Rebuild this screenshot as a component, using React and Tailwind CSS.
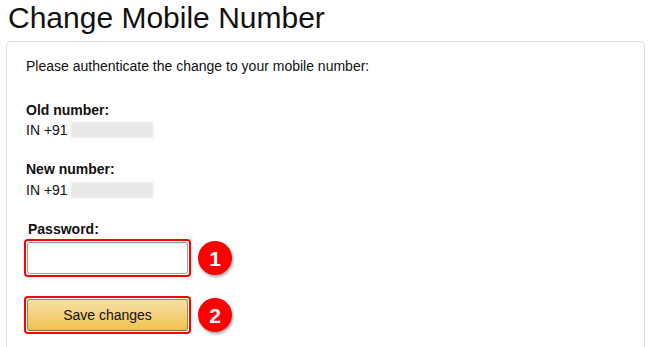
const Badge = ({ n }) => {
  return (
    <div className="w-[34px] h-[34px] rounded-full bg-[#f00] text-white flex items-center justify-center text-[21px] font-bold shadow-[1px_2px_3px_rgba(0,0,0,0.35)] leading-none">
      {n}
    </div>
  );
};

const Masked = () => {
  return <div className="ml-[3px] w-[82px] h-[16px] bg-[#e8e8e8] blur-[1px]"></div>;
};

export default function App() {
  return (
    <div
      className="w-[650px] h-[347px] overflow-hidden bg-white text-[#111]"
      style={{ fontFamily: '"Liberation Sans", Arial, sans-serif' }}
    >
      <h1 className="pl-[8px] text-[30px] leading-[36px] font-normal">Change Mobile Number</h1>
      <div className="mt-[5px] ml-[6px] w-[639px] h-[320px] border border-[#ddd] rounded-[5px] pt-[14px] pl-[19px]">
        <p className="text-[14px] leading-[20px]">Please authenticate the change to your mobile number:</p>

        <div className="mt-[24px] text-[14px] leading-[20px]">
          <div className="font-bold">Old number:</div>
          <div className="flex items-center">
            <span>IN +91</span>
            <Masked />
          </div>
        </div>

        <div className="mt-[19px] text-[14px] leading-[20px]">
          <div className="font-bold">New number:</div>
          <div className="mt-px flex items-center">
            <span>IN +91</span>
            <Masked />
          </div>
        </div>

        <div className="mt-[19px] pl-[2px] text-[14px] leading-[20px] font-bold">Password:</div>
        <div className="-ml-[2px] flex items-center gap-[7px]">
          <div className="w-[167px] h-[38px] border-2 border-[#f00] rounded-[4px] p-px">
            <div className="w-full h-full border border-[#a6a6a6] border-t-[#949494] rounded-[3px] bg-white shadow-[inset_0_1px_0_rgba(0,0,0,0.07)]"></div>
          </div>
          <Badge n="1" />
        </div>

        <div className="mt-[19px] -ml-[2px] flex items-center gap-[7px]">
          <div className="w-[167px] h-[38px] border-2 border-[#f00] rounded-[4px] p-px">
            <div className="w-full h-full border border-[#a88734] border-b-[#846a29] rounded-[3px] bg-gradient-to-b from-[#f7dfa5] to-[#f0c14b] flex items-center justify-center text-[14px]">
              Save changes
            </div>
          </div>
          <Badge n="2" />
        </div>
      </div>
    </div>
  );
}
